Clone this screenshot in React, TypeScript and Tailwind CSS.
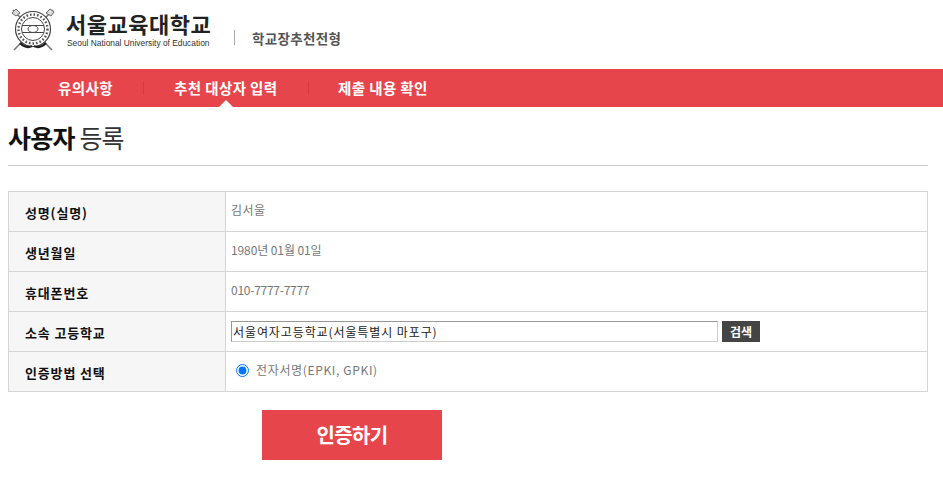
const KR = "font-['Noto_Sans_CJK_KR','Noto_Sans',sans-serif]";

function Logo() {
  return (
    <svg width="44" height="44" viewBox="0 0 44 44" fill="none" className="shrink-0">
      {/* crossed torches behind the seal */}
      <path d="M2 2 L41 42 M42 2 L3 42" stroke="#777" strokeWidth="1.6" />
      <path d="M1 5 L5 1 L9 5 L5 8 Z" fill="#ddd" stroke="#666" strokeWidth="1" />
      <path d="M35 5 L39 1 L43 4 L40 8 Z" fill="#ddd" stroke="#666" strokeWidth="1" />
      <circle cx="22" cy="21" r="17.5" fill="#fff" stroke="#444" strokeWidth="1.2" />
      <circle cx="22" cy="21" r="11.5" fill="#fff" stroke="#444" strokeWidth="1" />
      <circle cx="22" cy="21" r="14.5" stroke="#555" strokeWidth="2.4" strokeDasharray="1.6 2" />
      <path d="M11 17.5 H33 M11 24.5 H33" stroke="#444" strokeWidth="1" />
      <ellipse cx="22" cy="21" rx="5" ry="3.5" fill="#fff" stroke="#444" strokeWidth="1" />
      <path d="M9 35 Q15 41 21 38 M35 35 Q29 41 23 38" stroke="#222" strokeWidth="2.4" />
    </svg>
  );
}

const rows = [
  { label: "성명(실명)", value: "김서울", track: "tracking-[0.5px]" },
  { label: "생년월일", value: "1980년 01월 01일", track: "tracking-[-0.1px]" },
  { label: "휴대폰번호", value: "010-7777-7777", track: "tracking-[-0.25px]" },
];

function Label({ children }: { children: string }) {
  return (
    <th className="w-[217px] h-10 border border-[#d5d5d5] bg-[#f6f6f6] pl-[16px] pt-[2px] text-left text-[13px] font-bold tracking-[0.85px] text-[#111]">
      {children}
    </th>
  );
}

export default function App() {
  return (
    <div className={`${KR} w-[943px] h-[493px] overflow-hidden bg-white`}>
      <header className="flex h-[69px] items-start pl-[11px] pt-[8px]">
        <Logo />
        <div className="ml-[11px] flex w-[146px] flex-col pt-[4px]">
          <span className="h-[23px] text-[22px] leading-[23px] font-bold tracking-[0.5px] text-[#222] whitespace-nowrap">
            서울교육대학교
          </span>
          <span className="mt-[3px] ml-[1px] h-[10px] font-['Liberation_Sans',sans-serif] text-[8.4px] leading-[10px] text-[#333] whitespace-nowrap">
            Seoul National University of Education
          </span>
        </div>
        <div className="mt-[22px] ml-[22px] h-[15px] w-px bg-[#aaa]" />
        <span className="mt-[20px] ml-[17px] text-[13.5px] leading-[20px] font-bold tracking-[0.35px] text-[#555]">
          학교장추천전형
        </span>
      </header>

      <nav className="relative ml-[8px] flex h-[38px] items-center bg-[#e7454c] pl-[50px] text-[14.5px] font-bold tracking-[0.4px] text-white">
        <span className="w-[85px] whitespace-nowrap">유의사항</span>
        <span className="h-[14px] w-px bg-[#d23d44]" />
        <span className="ml-[30px] w-[134px] whitespace-nowrap">추천 대상자 입력</span>
        <span className="h-[14px] w-px bg-[#d23d44]" />
        <span className="ml-[29px] whitespace-nowrap">제출 내용 확인</span>
        <span className="absolute bottom-0 left-[211px] h-0 w-0 border-x-[7px] border-b-[7px] border-x-transparent border-b-white" />
      </nav>

      <main className="ml-[8px] w-[920px]">
        <h1 className="h-[59px] border-b border-[#c8c8c8] pt-[12px] text-[25px] leading-[36px] tracking-[-0.8px] text-[#333]">
          <b className="font-bold text-[#111]">사용자</b> 등록
        </h1>

        <table className="mt-[25px] w-full border-collapse text-[12px] text-[#777]">
          <tbody>
            {rows.map((r) => (
              <tr key={r.label}>
                <Label>{r.label}</Label>
                <td className={`h-10 border border-[#d5d5d5] pb-[3px] pl-[5px] ${r.track}`}>{r.value}</td>
              </tr>
            ))}
            <tr>
              <Label>소속 고등학교</Label>
              <td className="h-10 border border-[#d5d5d5] pl-[5px]">
                <div className="flex items-center gap-[4px]">
                  <input
                    readOnly
                    value="서울여자고등학교(서울특별시 마포구)"
                    className="h-[21px] w-[487px] border border-[#ccc] border-t-[#999] border-l-[#999] px-[1px] pb-[1px] text-[12px] tracking-[0.9px] text-[#222] outline-none"
                  />
                  <button className="h-[21px] w-[38px] bg-[#444] text-[12px] font-bold text-white">검색</button>
                </div>
              </td>
            </tr>
            <tr>
              <Label>인증방법 선택</Label>
              <td className="h-10 border border-[#d5d5d5] pb-[3px] pl-[10px]">
                <label className="flex items-center gap-[7px] tracking-[0.65px]">
                  <input type="radio" defaultChecked className="m-0 h-[13px] w-[13px] accent-[#0075ff]" />
                  전자서명(EPKI, GPKI)
                </label>
              </td>
            </tr>
          </tbody>
        </table>

        <button className="mt-[18px] ml-[254px] block h-[50px] w-[180px] bg-[#e7454c] text-[20px] font-bold tracking-[-0.7px] text-white">
          인증하기
        </button>
      </main>
    </div>
  );
}
